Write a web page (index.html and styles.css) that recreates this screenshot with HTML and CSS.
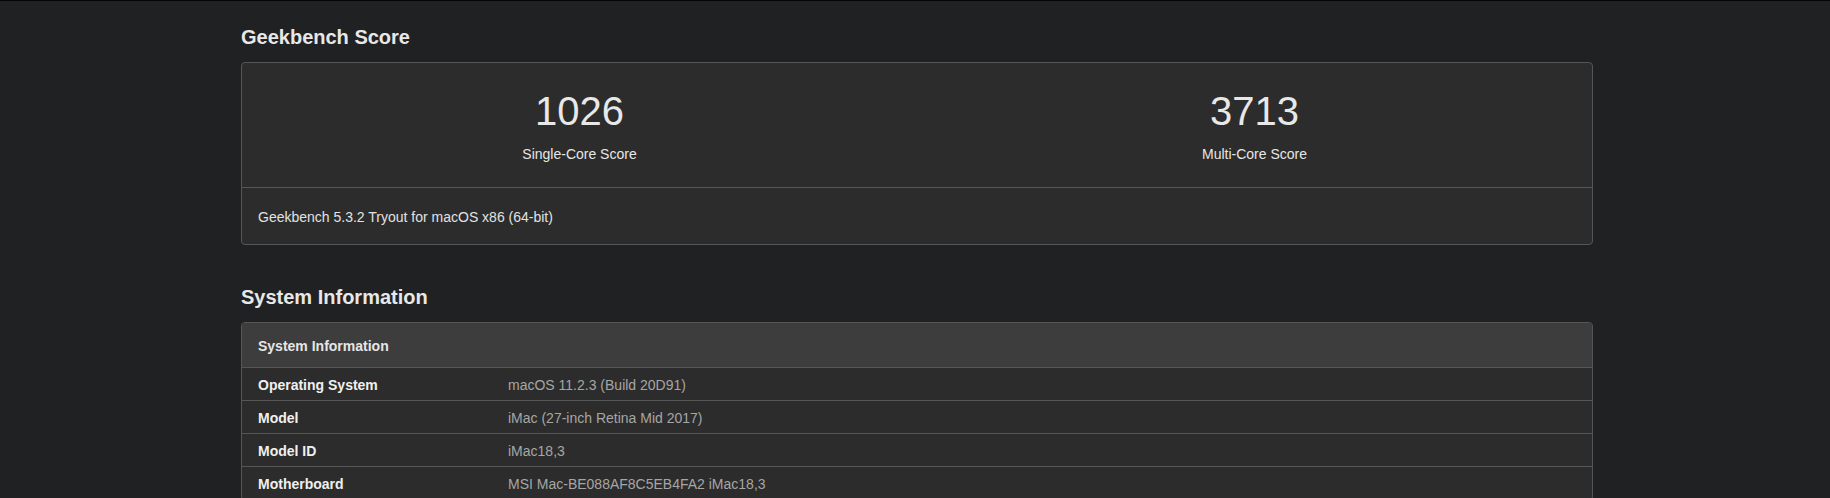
FILE: index.html
```html
<!DOCTYPE html>
<html lang="en">
<head>
<meta charset="utf-8">
<title>Geekbench Score</title>
<link rel="stylesheet" href="styles.css">
</head>
<body>
<main class="container">
  <h2 class="section-title">Geekbench Score</h2>
  <div class="card">
    <div class="scores">
      <div class="score">
        <div class="score-value">1026</div>
        <div class="score-label">Single-Core Score</div>
      </div>
      <div class="score">
        <div class="score-value">3713</div>
        <div class="score-label">Multi-Core Score</div>
      </div>
    </div>
    <div class="card-footer">Geekbench 5.3.2 Tryout for macOS x86 (64-bit)</div>
  </div>

  <h2 class="section-title section-title--second">System Information</h2>
  <div class="card">
    <div class="table-head">System Information</div>
    <div class="row">
      <div class="row-label">Operating System</div>
      <div class="row-value">macOS 11.2.3 (Build 20D91)</div>
    </div>
    <div class="row">
      <div class="row-label">Model</div>
      <div class="row-value">iMac (27-inch Retina Mid 2017)</div>
    </div>
    <div class="row">
      <div class="row-label">Model ID</div>
      <div class="row-value">iMac18,3</div>
    </div>
    <div class="row">
      <div class="row-label">Motherboard</div>
      <div class="row-value">MSI Mac-BE088AF8C5EB4FA2 iMac18,3</div>
    </div>
  </div>
</main>
</body>
</html>
```

FILE: styles.css
```css
html, body {
  margin: 0;
  padding: 0;
}

body {
  background: #202123;
  border-top: 1px solid #050505;
  font-family: "Liberation Sans", Arial, Helvetica, sans-serif;
  color: #e6e6e6;
  font-size: 14px;
  line-height: 20px;
}

.container {
  width: 1352px;
  margin-left: 241px;
  padding-top: 24px;
}

.section-title {
  margin: 0 0 13px 0;
  font-size: 20px;
  line-height: 24px;
  font-weight: bold;
  color: #e8e8e8;
}

.section-title--second {
  margin-top: 40px;
  margin-bottom: 13px;
}

.card {
  background: #2c2c2c;
  border: 1px solid #565656;
  border-radius: 4px;
  overflow: hidden;
}

.scores {
  display: grid;
  grid-template-columns: 1fr 1fr;
  padding: 24px 0 23px;
  border-bottom: 1px solid #565656;
}

.score {
  display: flex;
  flex-direction: column;
  align-items: center;
  gap: 9px;
}

.score-value {
  font-size: 40px;
  line-height: 48px;
  color: #e8e8e8;
}

.score-label {
  font-size: 14px;
  line-height: 20px;
  color: #e6e6e6;
}

.card-footer {
  padding: 19px 16px 17px;
  color: #e2e2e2;
}

.table-head {
  background: #3d3d3d;
  padding: 13px 16px 11px;
  font-weight: bold;
  color: #e6e6e6;
  border-bottom: 1px solid #565656;
}

.row {
  display: grid;
  grid-template-columns: 250px 1fr;
  border-bottom: 1px solid #565656;
}

.row-label,
.row-value {
  padding: 7px 16px 5px;
}

.row-label {
  font-weight: bold;
  color: #f0f0f0;
}

.row-value {
  color: #a6a6a6;
}
```
